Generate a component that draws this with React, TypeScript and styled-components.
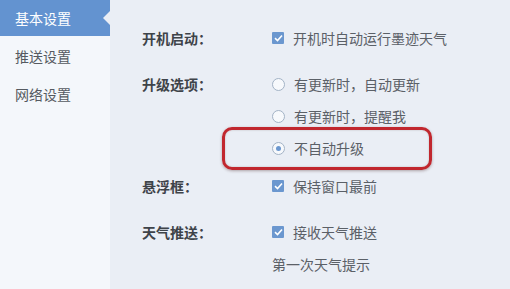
import React from 'react';
import styled, { createGlobalStyle } from 'styled-components';

const GlobalStyle = createGlobalStyle`
  html, body {
    margin: 0;
    padding: 0;
  }
  body {
    font-family: "Noto Sans CJK SC", "Noto Sans", sans-serif;
    font-size: 14px;
  }
`;

const Window = styled.div`
  display: flex;
  width: 510px;
  height: 289px;
  overflow: hidden;
  background: #eaeef5;
`;

const Sidebar = styled.nav`
  width: 110px;
  flex-shrink: 0;
  display: flex;
  flex-direction: column;
  gap: 2px;
  background: #f4f7fb;
`;

const NavItem = styled.div<{ $active?: boolean }>`
  position: relative;
  height: 36px;
  display: flex;
  align-items: center;
  padding-left: 15px;
  font-size: 14px;
  color: ${p => (p.$active ? '#ffffff' : '#555a61')};
  background: ${p => (p.$active ? '#6393d0' : 'transparent')};

  ${p =>
    p.$active &&
    `
    &::after {
      content: '';
      position: absolute;
      right: 0;
      top: 11px;
      border-style: solid;
      border-width: 7px 7px 7px 0;
      border-color: transparent #eaeef5 transparent transparent;
    }
  `}
`;

const Content = styled.main`
  flex: 1;
  padding: 22px 0 0 32px;
`;

const Section = styled.section<{ $gap: number }>`
  display: grid;
  grid-template-columns: 130px 1fr;
  margin-bottom: ${p => p.$gap}px;
`;

const Label = styled.div`
  height: 32px;
  display: flex;
  align-items: center;
  font-size: 14px;
  font-weight: 700;
  color: #3e4349;
`;

const Options = styled.div`
  display: flex;
  flex-direction: column;
`;

const Option = styled.div`
  position: relative;
  height: 32px;
  display: flex;
  align-items: center;
  gap: 9px;
  font-size: 14px;
  color: #5b6067;
`;

const Box = styled.span`
  width: 12px;
  height: 12px;
  flex-shrink: 0;
  display: flex;
  align-items: center;
  justify-content: center;
  background: #6b97cf;
  border-radius: 1px;
`;

const Radio = styled.span<{ $checked?: boolean }>`
  width: 11px;
  height: 11px;
  flex-shrink: 0;
  border-radius: 50%;
  border: 1px solid #a3b3c6;
  background: #f7f9fc;
  display: flex;
  align-items: center;
  justify-content: center;

  &::after {
    content: '';
    width: 5px;
    height: 5px;
    border-radius: 50%;
    background: ${p => (p.$checked ? '#6b97cf' : 'transparent')};
  }
`;

const Highlight = styled.div`
  position: absolute;
  left: -50px;
  top: -5px;
  width: 210px;
  height: 43px;
  box-sizing: border-box;
  border: 3px solid #c1272e;
  border-radius: 10px;
  box-shadow: 0 1px 3px rgba(60, 20, 20, 0.35), inset 0 0 2px rgba(60, 20, 20, 0.25);
  pointer-events: none;
`;

function Checkbox() {
  return (
    <Box>
      <svg width="9" height="8" viewBox="0 0 9 8">
        <path d="M1 4.2 L3.5 6.5 L8 1.5" fill="none" stroke="#fff" strokeWidth="1.6" />
      </svg>
    </Box>
  );
}

const navItems = ['基本设置', '推送设置', '网络设置'];

export default function App() {
  return (
    <>
      <GlobalStyle />
      <Window>
        <Sidebar>
          {navItems.map((item, i) => (
            <NavItem key={item} $active={i === 0}>
              {item}
            </NavItem>
          ))}
        </Sidebar>
        <Content>
          <Section $gap={14}>
            <Label>开机启动：</Label>
            <Options>
              <Option>
                <Checkbox />
                开机时自动运行墨迹天气
              </Option>
            </Options>
          </Section>
          <Section $gap={6}>
            <Label>升级选项：</Label>
            <Options>
              <Option>
                <Radio />
                有更新时，自动更新
              </Option>
              <Option>
                <Radio />
                有更新时，提醒我
              </Option>
              <Option>
                <Highlight />
                <Radio $checked />
                不自动升级
              </Option>
            </Options>
          </Section>
          <Section $gap={14}>
            <Label>悬浮框：</Label>
            <Options>
              <Option>
                <Checkbox />
                保持窗口最前
              </Option>
            </Options>
          </Section>
          <Section $gap={0}>
            <Label>天气推送：</Label>
            <Options>
              <Option>
                <Checkbox />
                接收天气推送
              </Option>
              <Option>第一次天气提示</Option>
            </Options>
          </Section>
        </Content>
      </Window>
    </>
  );
}
